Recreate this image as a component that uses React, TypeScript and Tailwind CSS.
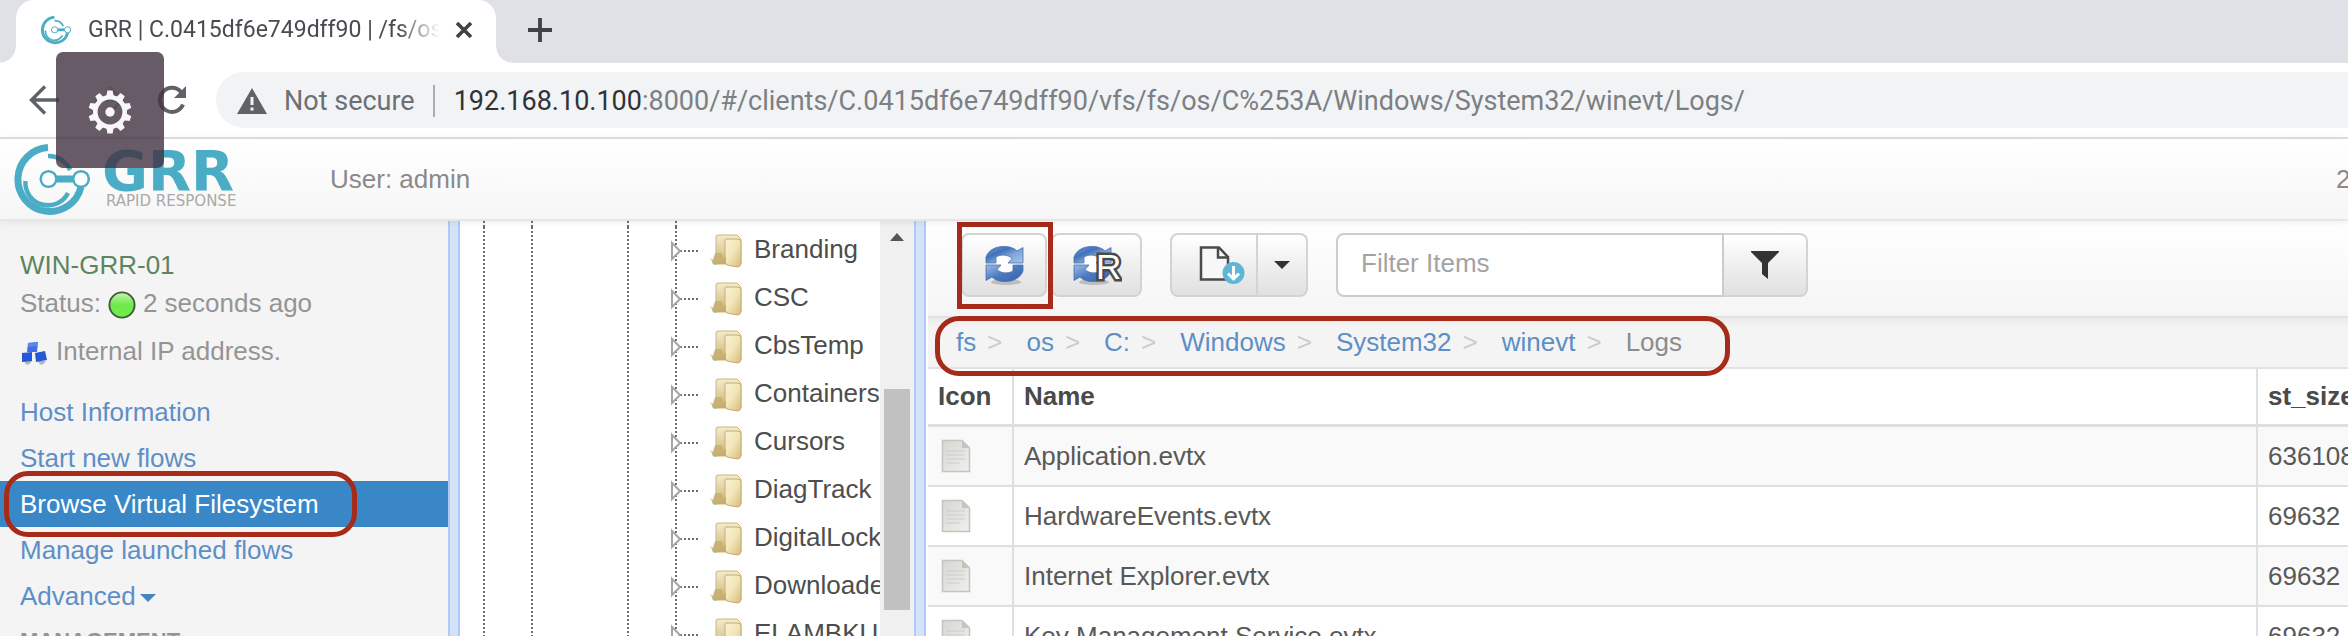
import type { ReactNode } from 'react';

const TEAL = '#4bacc6';

function GrrMark({ className }: { className: string }) {
  return (
    <svg viewBox="0 0 80 73" className={className} fill="none" stroke={TEAL} aria-hidden="true">
      <path d="M36 4.500A32 32 0 1 0 69 44" strokeWidth="7" />
      <path d="M13.500 38A22.500 22.500 0 0 0 56 50" strokeWidth="4.500" />
      <path d="M36 13A23 23 0 0 1 58 27" strokeWidth="4.500" />
      <path d="M44 36H61" strokeWidth="7" />
      <circle cx="36.500" cy="36" r="7.800" strokeWidth="2.500" fill="#fff" />
      <circle cx="69" cy="36" r="7.800" strokeWidth="2.500" fill="#fff" />
    </svg>
  );
}

function RefreshArrows() {
  const arrow = 'M1 17V11C4 3 12 .5 19 .5C25 .5 29 2 32 5L38 1.500V17H23L27 12.500C23 8.500 16 8 11 11V17Z';
  return (
    <g stroke="#4a6fae" strokeWidth="0.800">
      <ellipse cx="21" cy="36" rx="15" ry="3" fill="#000" opacity="0.180" stroke="none" />
      <path d="M8 10H28V17H31V26H11V19H8Z" fill="#fff" stroke="none" />
      <path d={arrow} fill="url(#arrowBlue)" />
      <path d={arrow} fill="url(#arrowBlueLow)" transform="rotate(180 19.500 18)" />
    </g>
  );
}

function RefreshIcon({ letter }: { letter?: string }) {
  return (
    <svg viewBox="0 0 50 40" className="h-10 w-[50px]" aria-hidden="true">
      <defs>
        <linearGradient id="arrowBlue" x1="0" y1="0" x2="1" y2="1">
          <stop offset="0" stopColor="#6f9ad6" />
          <stop offset="0.350" stopColor="#4272bb" />
          <stop offset="0.600" stopColor="#7fa6da" />
          <stop offset="1" stopColor="#a5c4ea" />
        </linearGradient>
        <linearGradient id="arrowBlueLow" x1="0" y1="0" x2="1" y2="1">
          <stop offset="0" stopColor="#3563ab" />
          <stop offset="0.500" stopColor="#4a79c0" />
          <stop offset="1" stopColor="#9dbde6" />
        </linearGradient>
      </defs>
      <g transform={letter ? 'translate(1 1)' : 'translate(6 1)'}>
        <RefreshArrows />
      </g>
      {letter && (
        <text
          x="24"
          y="34"
          fontSize="35"
          className="font-['Liberation_Sans']"
          fill="#fff"
          stroke="#4a4a4a"
          strokeWidth="5"
          paintOrder="stroke"
        >
          {letter}
        </text>
      )}
    </svg>
  );
}

function DownloadFileIcon() {
  return (
    <svg viewBox="0 0 46 40" className="h-10 w-[46px]" fill="none" aria-hidden="true">
      <path d="M2 2.500H20L29 12V34.500H2Z" fill="#f7f7f7" stroke="#4a4a4a" strokeWidth="2.500" />
      <path d="M19 2.500V12.500H29" stroke="#4a4a4a" strokeWidth="2.500" />
      <circle cx="34.500" cy="28" r="11" fill="#5fb5d6" />
      <path d="M34.500 21V34M29 28.500L34.500 34L40 28.500" stroke="#fff" strokeWidth="3" />
    </svg>
  );
}

function FolderIcon() {
  return (
    <svg viewBox="0 0 32 34" className="h-[34px] w-8 shrink-0" aria-hidden="true">
      <defs>
        <linearGradient id="folderBack" x1="0" y1="0" x2="0" y2="1">
          <stop offset="0" stopColor="#f3ead0" />
          <stop offset="1" stopColor="#cdb777" />
        </linearGradient>
        <linearGradient id="folderFront" x1="0" y1="0" x2="1" y2="1">
          <stop offset="0" stopColor="#faf1d2" />
          <stop offset="0.500" stopColor="#f2e5b8" />
          <stop offset="1" stopColor="#d3bb77" />
        </linearGradient>
      </defs>
      <path d="M0 24L4 31L8 31L4 26Z" fill="#999" opacity="0.500" />
      <path d="M6 3Q6 1 8 1H27L31 5V30H4Q2 30 3 27L6 18Z" fill="url(#folderBack)" stroke="#c9b682" strokeWidth="1" />
      <path d="M15 6L16 5H27Q31 5 31 8V29Q31 33 27 33L17 31L15 28Z" fill="url(#folderFront)" stroke="#c4ad6e" strokeWidth="1" />
      <path d="M3 29L6 19H12L13 23H16V30H4Z" fill="#c3ab68" opacity="0.700" />
    </svg>
  );
}

function FileIcon() {
  return (
    <svg viewBox="0 0 30 34" className="h-[34px] w-[30px]" aria-hidden="true">
      <defs>
        <linearGradient id="paper" x1="0" y1="0" x2="1" y2="1">
          <stop offset="0" stopColor="#d5d7d1" />
          <stop offset="1" stopColor="#f0f0ee" />
        </linearGradient>
      </defs>
      <path d="M1.500 1.500H21L28.500 9V32.500H1.500Z" fill="url(#paper)" stroke="#c3c5bf" strokeWidth="1.500" />
      <path d="M21 1.500V9H28.500Z" fill="#c3c6bf" />
      <path d="M5 12H24M5 16H24M5 20H24M5 24H19" stroke="#cccec8" strokeWidth="1.200" />
    </svg>
  );
}

function GearIcon() {
  const teeth = [0, 36, 72, 108, 144, 180, 216, 252, 288, 324];
  return (
    <svg viewBox="-22 -22 44 44" className="mt-1 h-11 w-11" fill="#f7f7f7" aria-hidden="true">
      {teeth.map((a) => (
        <path key={a} d="M-3.800 -15L-2.600 -21.500H2.600L3.800 -15Z" transform={`rotate(${a})`} />
      ))}
      <circle r="14.700" fill="none" stroke="#f7f7f7" strokeWidth="4.600" />
      <circle r="4.700" />
    </svg>
  );
}

function BrowserChrome() {
  return (
    <div className="shrink-0">
      <div className="flex h-[63px] bg-[#dfe1e6]">
        <span className="size-4 self-end bg-[radial-gradient(circle_at_0_0,#dfe1e6_15px,#fff_16px)]" />
        <div className="flex w-[480px] items-center rounded-t-[18px] bg-white pb-1 pl-6">
          <GrrMark className="h-[30px] w-8 shrink-0" />
          <span className="ml-4 w-[352px] overflow-hidden font-['Roboto',sans-serif] text-[23px] leading-8 whitespace-nowrap text-[#484b50] [mask-image:linear-gradient(to_right,#000_88%,transparent)]">
            GRR | C.0415df6e749dff90 | /fs/os
          </span>
          <button aria-label="Close tab" className="ml-[14px]">
            <svg viewBox="0 0 20 20" className="size-5" stroke="#3f4246" strokeWidth="3.600">
              <path d="M3 3L17 17M17 3L3 17" />
            </svg>
          </button>
        </div>
        <span className="size-4 self-end bg-[radial-gradient(circle_at_100%_0,#dfe1e6_15px,#fff_16px)]" />
        <button aria-label="New tab" className="mb-1 ml-4">
          <svg viewBox="0 0 24 24" className="size-6" stroke="#3f4246" strokeWidth="3.800">
            <path d="M12 0V24M0 12H24" />
          </svg>
        </button>
      </div>
      <div className="flex items-center border-b-2 border-[#e0e0e0] bg-white py-[9px] pl-[29px] font-['Roboto',sans-serif] text-[27px] leading-8">
        <button aria-label="Back">
          <svg viewBox="0 0 30 30" className="size-[30px]" fill="none" stroke="#5f6368" strokeWidth="3.400">
            <path d="M30 15H3M16 1.500L2.500 15L16 28.500" />
          </svg>
        </button>
        <button aria-label="Forward" className="ml-9">
          <svg viewBox="0 0 30 30" className="size-[30px]" fill="none" stroke="#c4c5c8" strokeWidth="3">
            <path d="M0 15H27M14 1.500L27.500 15L14 28.500" />
          </svg>
        </button>
        <button aria-label="Reload" className="ml-8">
          <svg viewBox="0 0 30 30" className="size-[30px]" fill="none" stroke="#5f6368" strokeWidth="4">
            <path d="M26 19.500A12 12 0 1 1 24 7" />
            <path d="M29 1V13H17Z" fill="#5f6368" stroke="none" />
          </svg>
        </button>
        <div className="ml-[29px] flex h-14 flex-1 items-center rounded-l-full bg-[#f1f3f4] pt-[2px] pl-[21px] whitespace-nowrap">
          <svg viewBox="0 0 30 26" className="h-[26px] w-[30px]" aria-hidden="true">
            <path d="M15 0L30 26H0Z" fill="#5f6368" />
            <path d="M13.500 9H16.500V17H13.500ZM13.500 19.500H16.500V22.500H13.500Z" fill="#f1f3f4" />
          </svg>
          <span className="ml-[17px] text-[#6c7074]">Not secure</span>
          <span className="mr-[19px] ml-[18px] h-8 w-[2px] bg-[#a9acb0]" />
          <span className="text-[#7c7f83]">
            <span className="text-[#303236]">192.168.10.100</span>
            :8000/#/clients/C.0415df6e749dff90/vfs/fs/os/C%253A/Windows/System32/winevt/Logs/
          </span>
        </div>
      </div>
    </div>
  );
}

function AppHeader() {
  return (
    <header className="relative z-10 flex h-[82px] shrink-0 items-center border-b-2 border-[#e6e6e6] bg-linear-to-b from-white to-[#f6f6f6] pl-3 text-[#8a8a8a] shadow-[0_1px_8px_rgba(0,0,0,0.080)]">
      <GrrMark className="h-[73px] w-20" />
      <svg viewBox="0 0 144 64" className="ml-2 h-16 w-36" role="img" aria-label="GRR Rapid Response">
        <text x="2" y="43" fontSize="56" fill={TEAL} className="font-['DejaVu_Sans'] font-bold">
          GRR
        </text>
        <text x="6" y="59" fontSize="15" fill="#a9a9a9" className="font-['DejaVu_Sans']">
          RAPID RESPONSE
        </text>
      </svg>
      <span className="ml-[86px]">User: admin</span>
      <span className="ml-auto w-3">2</span>
    </header>
  );
}

const links = ['Host Information', 'Start new flows', 'Browse Virtual Filesystem', 'Manage launched flows'];

function Sidebar() {
  return (
    <aside className="w-[448px] shrink-0 bg-[#f4f4f4] pt-[25px] leading-[38px] text-[#949494]">
      <div className="pl-5">
        <div className="text-[#5c8560]">WIN-GRR-01</div>
        <div className="flex items-center">
          Status:
          <svg viewBox="0 0 30 30" className="mx-[7px] mt-1 size-7" aria-hidden="true">
            <defs>
              <linearGradient id="online" x1="0" y1="0" x2="0" y2="1">
                <stop offset="0" stopColor="#c4f5b0" />
                <stop offset="0.500" stopColor="#6fe84a" />
                <stop offset="1" stopColor="#6df046" />
              </linearGradient>
            </defs>
            <circle cx="15" cy="15" r="13.500" fill="url(#online)" stroke="#3f5a38" strokeWidth="2" />
          </svg>
          2 seconds ago
        </div>
        <div className="mt-[10px] flex items-center">
          <svg viewBox="0 0 28 24" className="mt-1 mr-2 h-6 w-7" aria-hidden="true">
            <path d="M4 20H12L9 23.500H6ZM18 20H26L23 23.500H20Z" fill="#b5b5b5" />
            <path d="M8 2L18 1L17 11L7 11Z" fill="#3f6fe0" />
            <path d="M2 12L12 11L12 20L2 21ZM15 12L25 10L27 19L16 21Z" fill="#2558d6" />
            <path d="M8 2L18 1L17 5L8 6Z" fill="#5b88ec" />
          </svg>
          Internal IP address.
        </div>
      </div>
      <nav className="mt-[19px] leading-[46px] text-[#5d8fc6]">
        {links.map((label) =>
          label === 'Browse Virtual Filesystem' ? (
            <a key={label} href="#browse" className="relative block bg-[#3a87c8] pl-5 text-white">
              {label}
              <span className="absolute -top-[10px] -bottom-[10px] left-1 w-[353px] rounded-[24px] border-5 border-[#a62c19]" />
            </a>
          ) : (
            <a key={label} href="#link" className="block pl-5">
              {label}
            </a>
          ),
        )}
        <a href="#advanced" className="flex items-center pl-5">
          Advanced
          <svg viewBox="0 0 16 8" className="mt-1 ml-1 h-2 w-4" fill="#4585bf" aria-hidden="true">
            <path d="M0 0H16L8 8Z" />
          </svg>
        </a>
      </nav>
      <h2 className="pl-5 text-[22px] leading-[44px] font-bold">MANAGEMENT</h2>
    </aside>
  );
}

function Splitter({ children }: { children?: ReactNode }) {
  return <div className="w-3 shrink-0 border-x-2 border-[#b1c8fa] bg-[#d5e3f8]">{children}</div>;
}

const folders = ['Branding', 'CSC', 'CbsTemp', 'Containers', 'Cursors', 'DiagTrack', 'DigitalLocker', 'Downloaded Program Files', 'ELAMBKUP'];

function Guide({ visible }: { visible: boolean }) {
  return (
    <span className="flex w-12 shrink-0 justify-center self-stretch">
      {visible && <span className="w-[2px] bg-[repeating-linear-gradient(#6e6e6e_0_2px,#fff_2px_4px)]" />}
    </span>
  );
}

function Guides() {
  return (
    <>
      <Guide visible />
      <Guide visible />
      <Guide visible={false} />
      <Guide visible />
    </>
  );
}

function TreePanel() {
  return (
    <div className="flex w-[454px] shrink-0 bg-white">
      <div className="min-w-0 flex-1 overflow-hidden">
        <div className="flex h-[6px]">
          <Guides />
          <Guide visible />
        </div>
        <ul>
          {folders.map((name) => (
            <li key={name} className="flex h-12 items-center whitespace-nowrap text-[#4d4d4d]">
              <Guides />
              <svg viewBox="0 0 48 48" className="size-12 shrink-0" fill="none" aria-hidden="true">
                <path d="M24 0V48" stroke="#6e6e6e" strokeWidth="2" strokeDasharray="2 2" />
                <path d="M28 24H47" stroke="#6e6e6e" strokeWidth="2" strokeDasharray="2 2" />
                <path d="M20 16L28 24L20 32Z" fill="#fff" stroke="#a5a5a5" strokeWidth="2" />
              </svg>
              <span className="mr-3 ml-[10px]">
                <FolderIcon />
              </span>
              <span className="-mt-1 min-w-0 flex-1 overflow-hidden">{name}</span>
            </li>
          ))}
        </ul>
      </div>
      <div className="flex w-[34px] shrink-0 flex-col items-center bg-[#f0f0f0] pt-3">
        <svg viewBox="0 0 14 8" className="h-2 w-[14px]" fill="#555" aria-hidden="true">
          <path d="M0 8H14L7 0Z" />
        </svg>
        <div className="mt-[148px] h-[221px] w-[26px] bg-[#c1c1c1]" />
      </div>
    </div>
  );
}

const crumbs = ['fs', 'os', 'C:', 'Windows', 'System32', 'winevt'];

function Toolbar() {
  return (
    <div className="flex h-[97px] items-start border-b-2 border-[#e2e2e2] bg-linear-to-b from-white to-[#f5f5f5] pt-3 pl-[33px]">
      <div className="relative">
        <button aria-label="Refresh directory" className="flex h-16 w-[86px] items-center justify-center rounded-[8px] border-2 border-[#d3d3d3] bg-linear-to-b from-white to-[#e0e0e0]">
          <RefreshIcon />
        </button>
        <span className="absolute -top-[11px] -right-[6px] -bottom-3 -left-1 border-5 border-[#a62c19]" />
      </div>
      <button aria-label="Refresh recursively" className="ml-1 flex h-16 w-[91px] items-center justify-center rounded-[8px] border-2 border-[#d3d3d3] bg-linear-to-b from-white to-[#e0e0e0]">
        <RefreshIcon letter="R" />
      </button>
      <div className="ml-7 flex">
        <button aria-label="Download files" className="flex h-16 w-[88px] items-center justify-center rounded-l-[8px] border-2 border-[#d3d3d3] bg-linear-to-b from-white to-[#e0e0e0] pl-4">
          <DownloadFileIcon />
        </button>
        <button aria-label="Download options" className="flex h-16 w-[50px] items-center justify-center rounded-r-[8px] border-2 border-l-0 border-[#d3d3d3] bg-linear-to-b from-white to-[#e0e0e0]">
          <svg viewBox="0 0 16 8" className="h-2 w-4" fill="#333" aria-hidden="true">
            <path d="M0 0H16L8 8Z" />
          </svg>
        </button>
      </div>
      <form className="ml-7 flex">
        <input
          aria-label="Filter Items"
          placeholder="Filter Items"
          className="h-16 w-[388px] rounded-l-[8px] border-2 border-[#ccc] bg-white pb-1 pl-[23px] placeholder:text-[#a3a3a3]"
        />
        <button type="button" aria-label="Apply filter" className="flex h-16 w-[84px] items-center justify-center rounded-r-[8px] border-2 border-l-0 border-[#d3d3d3] bg-linear-to-b from-white to-[#e0e0e0]">
          <svg viewBox="0 0 28 28" className="size-7" fill="#333" aria-hidden="true">
            <path d="M0 0H28V1L17 12V28L11 23V12L0 1Z" />
          </svg>
        </button>
      </form>
    </div>
  );
}

const files = [
  ['Application.evtx', '636108'],
  ['HardwareEvents.evtx', '69632'],
  ['Internet Explorer.evtx', '69632'],
  ['Key Management Service.evtx', '69632'],
];

function FilePanel() {
  return (
    <main className="min-w-0 flex-1 overflow-hidden bg-white pl-[2px]">
      <Toolbar />
      <nav aria-label="Path" className="flex h-[51px] border-b-2 border-[#e2e2e2] bg-linear-to-b from-[#ebebeb] to-[#f4f4f4] to-20% pl-7">
        <ol className="relative flex items-center pb-[2px]">
          {crumbs.map((c) => (
            <li key={c} className="flex">
              <a href="#crumb" className="text-[#5d8fc6]">
                {c}
              </a>
              <span className="mr-6 ml-[11px] text-[#ccc]">&gt;</span>
            </li>
          ))}
          <li className="text-[#8c8c8c]">Logs</li>
          <span className="absolute -top-[2px] -right-12 -bottom-[9px] -left-[21px] rounded-[24px] border-5 border-[#a62c19]" />
        </ol>
      </nav>
      <table className="w-full table-fixed border-separate border-spacing-0 text-left whitespace-nowrap text-[#585858]">
        <thead>
          <tr className="h-[58px] text-[#4a4a4a]">
            <th className="w-[86px] border-r-2 border-b-3 border-[#dfdfdf] pb-[2px] pl-[10px]">Icon</th>
            <th className="border-r-2 border-b-3 border-[#dfdfdf] pb-[2px] pl-[10px]">Name</th>
            <th className="w-[90px] border-b-3 border-[#dfdfdf] pb-[2px] pl-[10px]">st_size</th>
          </tr>
        </thead>
        <tbody>
          {files.map(([name, size]) => (
            <tr key={name} className="h-[60px] odd:bg-[#f9f9f9]">
              <td className="border-r-2 border-b-2 border-[#dfdfdf] pl-[13px]">
                <FileIcon />
              </td>
              <td className="border-r-2 border-b-2 border-[#dfdfdf] pl-[10px]">{name}</td>
              <td className="border-b-2 border-[#dfdfdf] pl-[10px]">{size}</td>
            </tr>
          ))}
        </tbody>
      </table>
    </main>
  );
}

export default function App() {
  return (
    <div className="relative flex h-screen flex-col overflow-hidden bg-white font-['Liberation_Sans',Arial,sans-serif] text-[26px] leading-[38px]">
      <BrowserChrome />
      <AppHeader />
      <div className="flex min-h-0 flex-1 overflow-hidden">
        <Sidebar />
        <Splitter />
        <TreePanel />
        <Splitter />
        <FilePanel />
      </div>
      <button
        aria-label="Settings"
        className="absolute top-[52px] left-14 z-20 flex h-[116px] w-[108px] items-center justify-center rounded-[7px] bg-[rgba(65,50,65,0.800)]"
      >
        <GearIcon />
      </button>
    </div>
  );
}
